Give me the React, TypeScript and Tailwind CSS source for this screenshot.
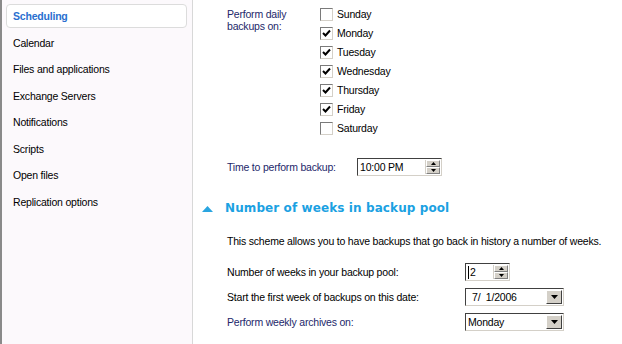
const navItems = [
  "Scheduling",
  "Calendar",
  "Files and applications",
  "Exchange Servers",
  "Notifications",
  "Scripts",
  "Open files",
  "Replication options",
];

const days = [
  { name: "Sunday", on: false },
  { name: "Monday", on: true },
  { name: "Tuesday", on: true },
  { name: "Wednesday", on: true },
  { name: "Thursday", on: true },
  { name: "Friday", on: true },
  { name: "Saturday", on: false },
];

const CheckBox = ({ on }: { on: boolean }) => (
  <span className="w-[13px] h-[13px] border bg-white flex items-center justify-center shrink-0 border-t-[#7a7a7a] border-l-[#7a7a7a] border-r-[#d4d0c8] border-b-[#d4d0c8]">
    {on && (
      <svg width="9" height="9" viewBox="0 0 9 9">
        <path d="M1 4 L3.5 6.5 L8 1.5" stroke="#000" strokeWidth="2" fill="none" />
      </svg>
    )}
  </span>
);

const SpinBtns = () => (
  <div className="flex flex-col w-[15px] h-full border-l border-[#d4d0c8]">
    <div className="flex-1 bg-[#d4d0c8] border border-t-white border-l-white border-r-[#808080] border-b-[#808080] flex items-center justify-center">
      <svg width="5" height="3" viewBox="0 0 5 3"><path d="M0 3 L2.5 0 L5 3Z" fill="#000" /></svg>
    </div>
    <div className="flex-1 bg-[#d4d0c8] border border-t-white border-l-white border-r-[#808080] border-b-[#808080] flex items-center justify-center">
      <svg width="5" height="3" viewBox="0 0 5 3"><path d="M0 0 L2.5 3 L5 0Z" fill="#000" /></svg>
    </div>
  </div>
);

const DropBtn = () => (
  <div className="w-[16px] h-full bg-[#d4d0c8] border border-t-white border-l-white border-r-[#404040] border-b-[#404040] flex items-center justify-center">
    <svg width="7" height="4" viewBox="0 0 7 4"><path d="M0 0 L3.5 4 L7 0Z" fill="#000" /></svg>
  </div>
);

const Field = ({ w, children }: { w: string; children: React.ReactNode }) => (
  <div className={`${w} h-[18px] flex items-center bg-white border border-t-[#404040] border-l-[#404040] border-r-[#d4d0c8] border-b-[#d4d0c8] p-[1px]`}>
    {children}
  </div>
);

export default function App() {
  return (
    <div className="w-[622px] h-[344px] flex bg-white text-[10.5px] leading-[13px] tracking-[-0.2px] text-black overflow-hidden" style={{ fontFamily: "Tahoma, 'Liberation Sans', Arial, sans-serif" }}>
      <div className="w-[193px] shrink-0 bg-[#fcf9fc] border-l-[2px] border-l-[#8a8a8a] border-r border-r-[#d8d8d8] pt-[4px] pl-[4px] pr-[5px]">
        {navItems.map((item, i) =>
          i === 0 ? (
            <div key={item} className="h-[24px] flex items-center pl-[6px] bg-white border border-[#dcdcdc] rounded-[4px] font-bold text-[#2a6fcf] mb-[2px]">
              {item}
            </div>
          ) : (
            <div key={item} className="h-[26.5px] flex items-center pl-[7px]">
              {item}
            </div>
          )
        )}
      </div>

      <div className="flex-1 pl-[34px] pt-[5px]">
        <div className="flex">
          <div className="w-[93px] text-[#23276a] leading-[12px] pt-[3px]">
            Perform daily
            <br />
            backups on:
          </div>
          <div className="flex flex-col">
            {days.map((d) => (
              <div key={d.name} className="h-[19px] flex items-center gap-[4px]">
                <CheckBox on={d.on} />
                <span>{d.name}</span>
              </div>
            ))}
          </div>
        </div>

        <div className="flex items-center mt-[20px]">
          <span className="w-[130px] text-[#23276a]">Time to perform backup:</span>
          <Field w="w-[85px]">
            <span className="flex-1 pl-[1px]">10:00 PM</span>
            <SpinBtns />
          </Field>
        </div>

        <div className="flex items-center h-[15px] -ml-[25px] mt-[25px]">
          <svg width="11" height="6" viewBox="0 0 11 6" className="mr-[12px]">
            <path d="M0 6 L5.5 0 L11 6Z" fill="#2aa5e0" />
          </svg>
          <span className="font-bold text-[12px] text-[#1ba1e2] tracking-[0.1px]" style={{ fontFamily: "Verdana, 'DejaVu Sans', sans-serif" }}>
            Number of weeks in backup pool
          </span>
        </div>

        <div className="mt-[19px] whitespace-nowrap">
          This scheme allows you to have backups that go back in history a number of weeks.
        </div>

        <div className="flex flex-col gap-[7px] mt-[15px]">
          <div className="flex items-center">
            <span className="w-[238px]">Number of weeks in your backup pool:</span>
            <Field w="w-[45px]">
              <span className="flex-1 pl-[1px] flex items-center">
                <span className="w-[1px] h-[13px] bg-black mr-[1px]" />2
              </span>
              <SpinBtns />
            </Field>
          </div>
          <div className="flex items-center">
            <span className="w-[238px]">Start the first week of backups on this date:</span>
            <Field w="w-[99px]">
              <span className="flex-1 pl-[5px]">7/&nbsp; 1/2006</span>
              <DropBtn />
            </Field>
          </div>
          <div className="flex items-center">
            <span className="w-[238px] text-[#23276a]">Perform weekly archives on:</span>
            <Field w="w-[99px]">
              <span className="flex-1 pl-[1px]">Monday</span>
              <DropBtn />
            </Field>
          </div>
        </div>
      </div>
    </div>
  );
}
